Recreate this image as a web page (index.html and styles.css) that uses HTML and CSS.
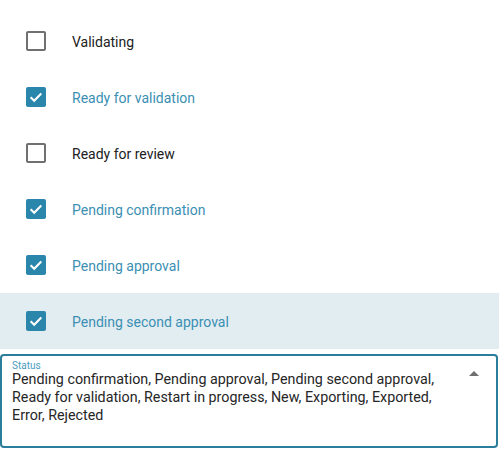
FILE: index.html
```html
<!DOCTYPE html>
<html>
<head>
<meta charset="utf-8">
<link rel="stylesheet" href="styles.css">
</head>
<body>
<div class="menu">
  <div class="row"><span class="box"></span><span class="label">Validating</span></div>
  <div class="row checked"><span class="box"><svg viewBox="0 0 20 20" width="20" height="20"><path d="M4.6 10.2 L8.2 13.7 L15.3 6.6" fill="none" stroke="#fff" stroke-width="2.1"/></svg></span><span class="label">Ready for validation</span></div>
  <div class="row"><span class="box"></span><span class="label">Ready for review</span></div>
  <div class="row checked"><span class="box"><svg viewBox="0 0 20 20" width="20" height="20"><path d="M4.6 10.2 L8.2 13.7 L15.3 6.6" fill="none" stroke="#fff" stroke-width="2.1"/></svg></span><span class="label">Pending confirmation</span></div>
  <div class="row checked"><span class="box"><svg viewBox="0 0 20 20" width="20" height="20"><path d="M4.6 10.2 L8.2 13.7 L15.3 6.6" fill="none" stroke="#fff" stroke-width="2.1"/></svg></span><span class="label">Pending approval</span></div>
  <div class="row checked active"><span class="box"><svg viewBox="0 0 20 20" width="20" height="20"><path d="M4.6 10.2 L8.2 13.7 L15.3 6.6" fill="none" stroke="#fff" stroke-width="2.1"/></svg></span><span class="label">Pending second approval</span></div>
</div>
<div class="field">
  <div class="field-label">Status</div>
  <div class="field-value">Pending confirmation, Pending approval, Pending second approval, Ready for validation, Restart in progress, New, Exporting, Exported, Error, Rejected</div>
  <span class="caret"></span>
</div>
</body>
</html>
```
FILE: styles.css
```css
html, body {
  margin: 0;
  padding: 0;
  background: #fff;
  font-family: Roboto, "Liberation Sans", sans-serif;
}
.menu {
  padding-top: 13px;
  width: 499px;
}
.row {
  height: 56px;
  display: flex;
  align-items: center;
  padding-left: 26px;
  box-sizing: border-box;
}
.row.active {
  background: #e2edf2;
}
.box {
  width: 20px;
  height: 20px;
  box-sizing: border-box;
  border: 2px solid #707070;
  border-radius: 2px;
  margin-right: 26px;
  display: flex;
  align-items: center;
  justify-content: center;
  flex: none;
}
.checked .box {
  border: none;
  background: #2a86aa;
}
.box svg {
  display: block;
}
.label {
  font-size: 14px;
  color: #212121;
  margin-top: 1px;
}
.checked .label {
  color: #3b8fb3;
}
.field {
  position: relative;
  margin-top: 5px;
  width: 498px;
  height: 94px;
  box-sizing: border-box;
  border: 2px solid #2b7d9c;
  border-radius: 4px;
  padding: 5px 40px 0 10px;
}
.field-label {
  font-size: 10px;
  line-height: 10px;
  color: #4b9cbf;
}
.field-value {
  font-size: 14.3px;
  line-height: 18px;
  margin-top: -1px;
  color: #262626;
}
.caret {
  position: absolute;
  right: 17px;
  top: 15px;
  width: 0;
  height: 0;
  border-left: 5px solid transparent;
  border-right: 5px solid transparent;
  border-bottom: 5px solid #6f6f6f;
}
```
